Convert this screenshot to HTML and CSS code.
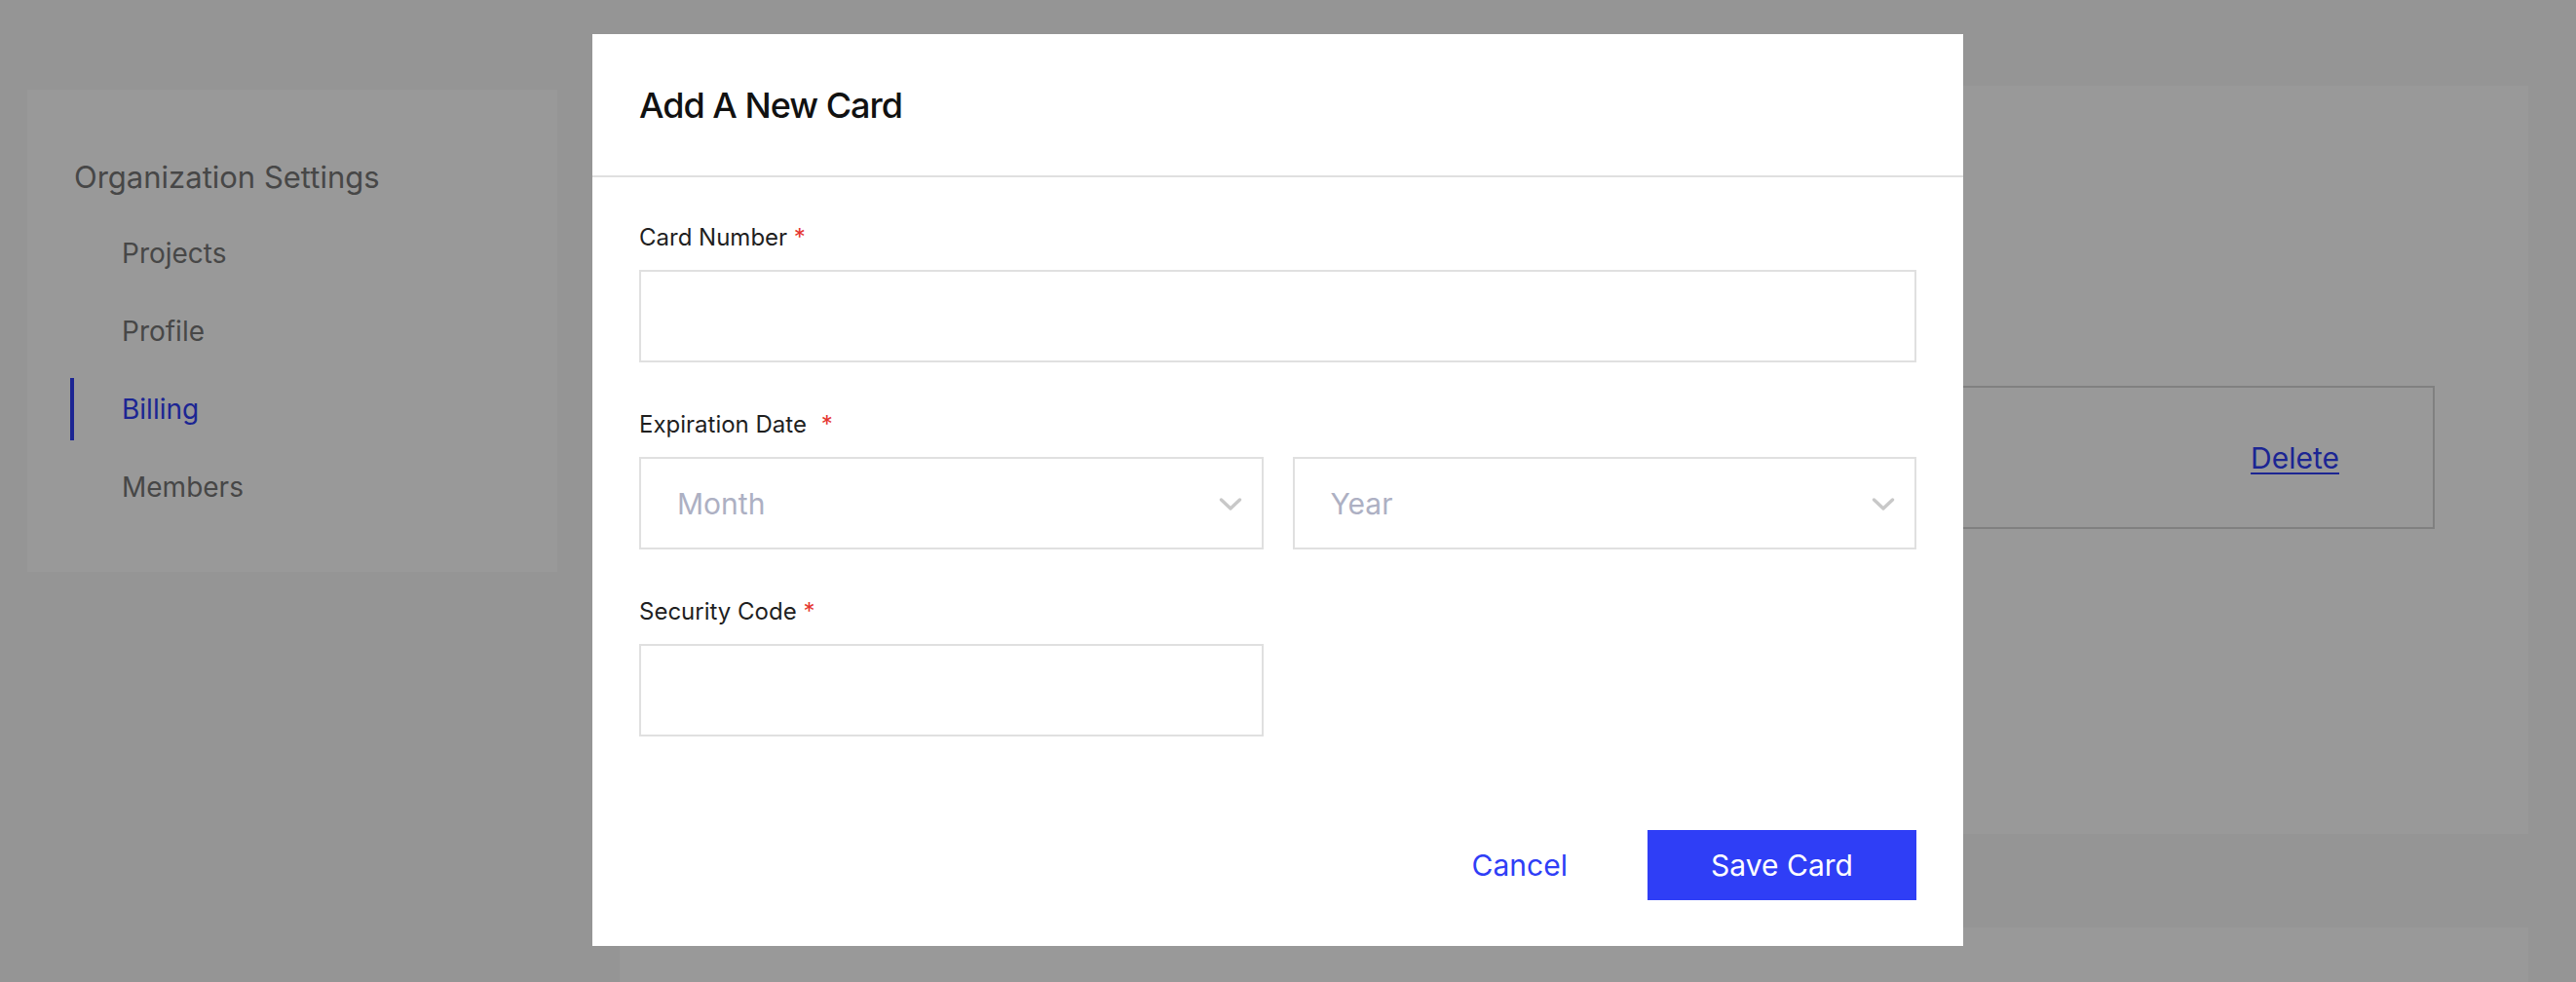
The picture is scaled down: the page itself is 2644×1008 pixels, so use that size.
FILE: index.html
```html
<!DOCTYPE html>
<html lang="en">
<head>
<meta charset="utf-8">
<title>Billing - Add A New Card</title>
<link rel="stylesheet" href="styles.css">
</head>
<body>
<div class="page">
  <aside class="sidebar">
    <h3 class="sidebar-title">Organization Settings</h3>
    <nav class="nav">
      <a class="nav-item">Projects</a>
      <a class="nav-item">Profile</a>
      <a class="nav-item active">Billing</a>
      <a class="nav-item">Members</a>
    </nav>
  </aside>
  <main class="content">
    <section class="panel panel-main">
      <h2 class="panel-title">Billing</h2>
      <div class="card-box">
        <span class="card-info">Visa ending in 4242</span>
        <a class="delete-link">Delete</a>
      </div>
    </section>
    <section class="panel panel-second"></section>
  </main>
</div>

<div class="overlay">
  <div class="modal">
    <div class="modal-header">
      <h2 class="modal-title">Add A New Card</h2>
    </div>
    <form class="modal-body">
      <div class="field">
        <label class="field-label">Card Number <span class="req">*</span></label>
        <input class="input" type="text">
      </div>
      <div class="field">
        <label class="field-label">Expiration Date <span class="req req-wide">*</span></label>
        <div class="row2">
          <div class="select">
            <span class="select-text">Month</span>
            <svg class="chevron" viewBox="0 0 24 13" width="24" height="13"><path d="M2.5 2 L12 11 L21.5 2" fill="none" stroke="#c8c8c8" stroke-width="3.4" stroke-linecap="round" stroke-linejoin="round"/></svg>
          </div>
          <div class="select">
            <span class="select-text">Year</span>
            <svg class="chevron" viewBox="0 0 24 13" width="24" height="13"><path d="M2.5 2 L12 11 L21.5 2" fill="none" stroke="#c8c8c8" stroke-width="3.4" stroke-linecap="round" stroke-linejoin="round"/></svg>
          </div>
        </div>
      </div>
      <div class="field">
        <label class="field-label">Security Code <span class="req">*</span></label>
        <div class="row2">
          <input class="input" type="text">
        </div>
      </div>
      <div class="actions">
        <button type="button" class="btn-cancel">Cancel</button>
        <button type="button" class="btn-primary">Save Card</button>
      </div>
    </form>
  </div>
</div>
</body>
</html>
```
FILE: styles.css
```css
* { box-sizing: border-box; }

html, body {
  margin: 0;
  height: 100%;
  overflow: hidden;
}

body {
  background: #f8f8f8;
  font-family: Inter, "Noto Sans", "Liberation Sans", sans-serif;
  color: #1a1a1a;
}

/* ---------- background page ---------- */
.page {
  display: flex;
  align-items: flex-start;
  padding: 0 49px 0 28px;
}

.sidebar {
  width: 544px;
  margin-top: 92px;
  background: #fff;
  padding: 70px 0 55px 0;
}

.sidebar-title {
  margin: 0 0 26px 48px;
  font-size: 31px;
  line-height: 40px;
  font-weight: 400;
  color: #777;
}

.nav {
  display: flex;
  flex-direction: column;
  gap: 16px;
}

.nav-item {
  display: block;
  margin-left: 44px;
  border-left: 4px solid transparent;
  padding-left: 49px;
  height: 64px;
  line-height: 64px;
  font-size: 28px;
  color: #777;
}

.nav-item.active {
  border-left-color: #2f3ef6;
  color: #2f3ef6;
}

.content {
  flex: 1;
  margin-left: 64px;
  margin-top: 88px;
  display: flex;
  flex-direction: column;
  gap: 96px;
}

.panel {
  background: #fff;
}

.panel-main {
  height: 768px;
  padding: 60px 96px 0 96px;
}

.panel-title {
  margin: 0 0 200px 0;
  height: 48px;
  font-size: 36px;
  line-height: 48px;
  font-weight: 500;
}

.card-box {
  height: 147px;
  border: 2px solid #d6d6d6;
  display: flex;
  align-items: center;
  justify-content: space-between;
  padding: 0 96px 0 48px;
}

.card-info {
  font-size: 28px;
  color: #333;
}

.delete-link {
  font-size: 30px;
  color: #2f3ef6;
  text-decoration: underline;
  text-underline-offset: 4px;
  text-decoration-thickness: 2px;
}

.panel-second {
  height: 56px;
}

/* ---------- modal ---------- */
.overlay {
  position: fixed;
  inset: 0;
  background: rgba(0, 0, 0, 0.4);
  display: flex;
  align-items: flex-start;
  padding: 35px 0 0 608px;
}

.modal {
  width: 1407px;
  background: #fff;
}

.modal-header {
  height: 147px;
  border-bottom: 2px solid #e0e0e0;
  display: flex;
  align-items: center;
  padding: 0 48px;
}

.modal-title {
  margin: 0;
  font-size: 36px;
  font-weight: 500;
  color: #111;
  letter-spacing: -1px;
}

.modal-body {
  padding: 46px 48px 47px 48px;
  margin: 0;
}

.field {
  margin-bottom: 48px;
}

.field-label {
  display: block;
  height: 32px;
  line-height: 32px;
  margin-bottom: 17px;
  font-size: 24px;
  color: #1f1f1f;
}

.req {
  color: #e5362f;
}

.req-wide {
  margin-left: 8px;
}

.row2 {
  display: grid;
  grid-template-columns: 1fr 1fr;
  gap: 30px;
}

.input {
  display: block;
  width: 100%;
  height: 95px;
  border: 2px solid #e0e0e0;
  border-radius: 0;
  background: #fff;
  outline: none;
  font-family: inherit;
  font-size: 30px;
  padding: 0 36px;
  margin: 0;
}

.select {
  height: 95px;
  border: 2px solid #e0e0e0;
  display: flex;
  align-items: center;
  justify-content: space-between;
  padding: 0 20px 0 37px;
}

.select-text {
  font-size: 30px;
  color: #adb0c3;
}

.chevron {
  display: block;
  margin-top: 2px;
}

.actions {
  margin-top: 96px;
  display: flex;
  justify-content: flex-end;
  align-items: center;
  gap: 82px;
}

.btn-cancel {
  border: 0;
  background: none;
  padding: 0;
  font-family: inherit;
  font-size: 30px;
  color: #2f3ef6;
  cursor: pointer;
}

.btn-primary {
  width: 276px;
  height: 72px;
  border: 0;
  border-radius: 0;
  background: #2f3ef6;
  color: #fff;
  font-family: inherit;
  font-size: 30px;
  cursor: pointer;
}
```
